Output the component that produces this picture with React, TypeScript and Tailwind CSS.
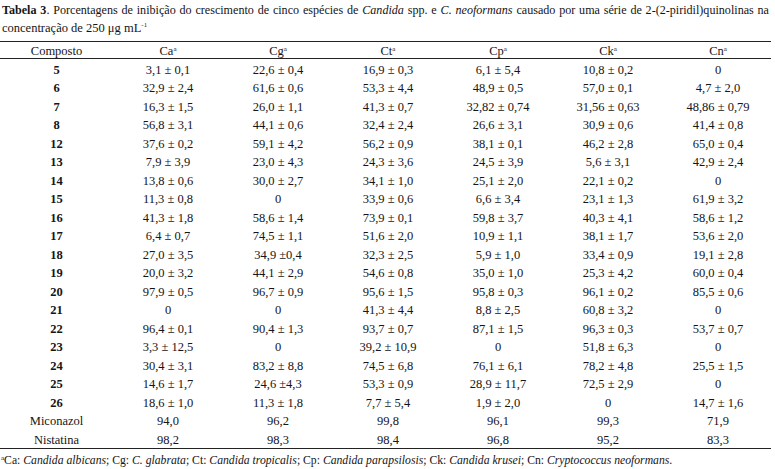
import React from "react";

type Row = [string, string, string, string, string, string, string, boolean];

const rows: Row[] = [
  ["5", "3,1 ± 0,1", "22,6 ± 0,4", "16,9 ± 0,3", "6,1 ± 5,4", "10,8 ± 0,2", "0", true],
  ["6", "32,9 ± 2,4", "61,6 ± 0,6", "53,3 ± 4,4", "48,9 ± 0,5", "57,0 ± 0,1", "4,7 ± 2,0", true],
  ["7", "16,3 ± 1,5", "26,0 ± 1,1", "41,3 ± 0,7", "32,82 ± 0,74", "31,56 ± 0,63", "48,86 ± 0,79", true],
  ["8", "56,8 ± 3,1", "44,1 ± 0,6", "32,4 ± 2,4", "26,6 ± 3,1", "30,9 ± 0,6", "41,4 ± 0,8", true],
  ["12", "37,6 ± 0,2", "59,1 ± 4,2", "56,2 ± 0,9", "38,1 ± 0,1", "46,2 ± 2,8", "65,0 ± 0,4", true],
  ["13", "7,9 ± 3,9", "23,0 ± 4,3", "24,3 ± 3,6", "24,5 ± 3,9", "5,6 ± 3,1", "42,9 ± 2,4", true],
  ["14", "13,8 ± 0,6", "30,0 ± 2,7", "34,1 ± 1,0", "25,1 ± 2,0", "22,1 ± 0,2", "0", true],
  ["15", "11,3 ± 0,8", "0", "33,9 ± 0,6", "6,6 ± 3,4", "23,1 ± 1,3", "61,9 ± 3,2", true],
  ["16", "41,3 ± 1,8", "58,6 ± 1,4", "73,9 ± 0,1", "59,8 ± 3,7", "40,3 ± 4,1", "58,6 ± 1,2", true],
  ["17", "6,4 ± 0,7", "74,5 ± 1,1", "51,6 ± 2,0", "10,9 ± 1,1", "38,1 ± 1,7", "53,6 ± 2,0", true],
  ["18", "27,0 ± 3,5", "34,9 ±0,4", "32,3 ± 2,5", "5,9 ± 1,0", "33,4 ± 0,9", "19,1 ± 2,8", true],
  ["19", "20,0 ± 3,2", "44,1 ± 2,9", "54,6 ± 0,8", "35,0 ± 1,0", "25,3 ± 4,2", "60,0 ± 0,4", true],
  ["20", "97,9 ± 0,5", "96,7 ± 0,9", "95,6 ± 1,5", "95,8 ± 0,3", "96,1 ± 0,2", "85,5 ± 0,6", true],
  ["21", "0", "0", "41,3 ± 4,4", "8,8 ± 2,5", "60,8 ± 3,2", "0", true],
  ["22", "96,4 ± 0,1", "90,4 ± 1,3", "93,7 ± 0,7", "87,1 ± 1,5", "96,3 ± 0,3", "53,7 ± 0,7", true],
  ["23", "3,3 ± 12,5", "0", "39,2 ± 10,9", "0", "51,8 ± 6,3", "0", true],
  ["24", "30,4 ± 3,1", "83,2 ± 8,8", "74,5 ± 6,8", "76,1 ± 6,1", "78,2 ± 4,8", "25,5 ± 1,5", true],
  ["25", "14,6 ± 1,7", "24,6 ±4,3", "53,3 ± 0,9", "28,9 ± 11,7", "72,5 ± 2,9", "0", true],
  ["26", "18,6 ± 1,0", "11,3 ± 1,8", "7,7 ± 5,4", "1,9 ± 2,0", "0", "14,7 ± 1,6", true],
  ["Miconazol", "94,0", "96,2", "99,8", "96,1", "99,3", "71,9", false],
  ["Nistatina", "98,2", "98,3", "98,4", "96,8", "95,2", "83,3", false],
];

const headers = ["Ca", "Cg", "Ct", "Cp", "Ck", "Cn"];

const grid = "grid grid-cols-[113px_repeat(6,110px)]";

export default function App() {
  return (
    <div
      className="w-[775px] h-[469px] bg-white text-[#161415] overflow-hidden"
      style={{ fontFamily: '"Liberation Serif", "Times New Roman", serif' }}
    >
      <div className="pl-[2px] pr-[6px] pt-[1px] text-[12.1px] leading-[18px]">
        <div className="text-justify [text-align-last:justify] whitespace-nowrap">
          <b>Tabela 3</b>. Porcentagens de inibição do crescimento de cinco espécies de <i>Candida</i> spp. e{" "}
          <i>C. neoformans</i> causado por uma série de 2-(2-piridil)quinolinas na
        </div>
        <div className="text-[12.5px]">
          concentração de 250 μg mL<sup className="text-[7px] relative -top-[5px]">-1</sup>
        </div>
      </div>

      <div className="mt-[4px] w-[771px] text-[12.5px]">
        <div className={`${grid} h-[18px] items-center border-t border-b border-[#222] leading-none pt-[2px]`}>
          <div className="text-center">Composto</div>
          {headers.map((h) => (
            <div key={h} className="text-center">
              {h}
              <sup className="text-[7px] relative -top-[4px]">a</sup>
            </div>
          ))}
        </div>
        <div className="border-b border-[#222]">
          {rows.map((r) => (
            <div key={r[0]} className={`${grid} h-[18.5px] items-center leading-none pt-[3px]`}>
              <div className={`text-center ${r[7] ? "font-bold" : ""}`}>{r[0]}</div>
              {r.slice(1, 7).map((v, i) => (
                <div key={i} className="text-center">
                  {v as string}
                </div>
              ))}
            </div>
          ))}
        </div>
      </div>

      <div className="pl-[1px] pt-[3px] text-[11.7px] leading-[18px] whitespace-nowrap">
        <sup className="text-[7px] relative -top-[4px]">a</sup>Ca: <i>Candida albicans</i>; Cg: <i>C. glabrata</i>; Ct:{" "}
        <i>Candida tropicalis</i>; Cp: <i>Candida parapsilosis</i>; Ck: <i>Candida krusei</i>; Cn:{" "}
        <i>Cryptococcus neoformans</i>.
      </div>
    </div>
  );
}
